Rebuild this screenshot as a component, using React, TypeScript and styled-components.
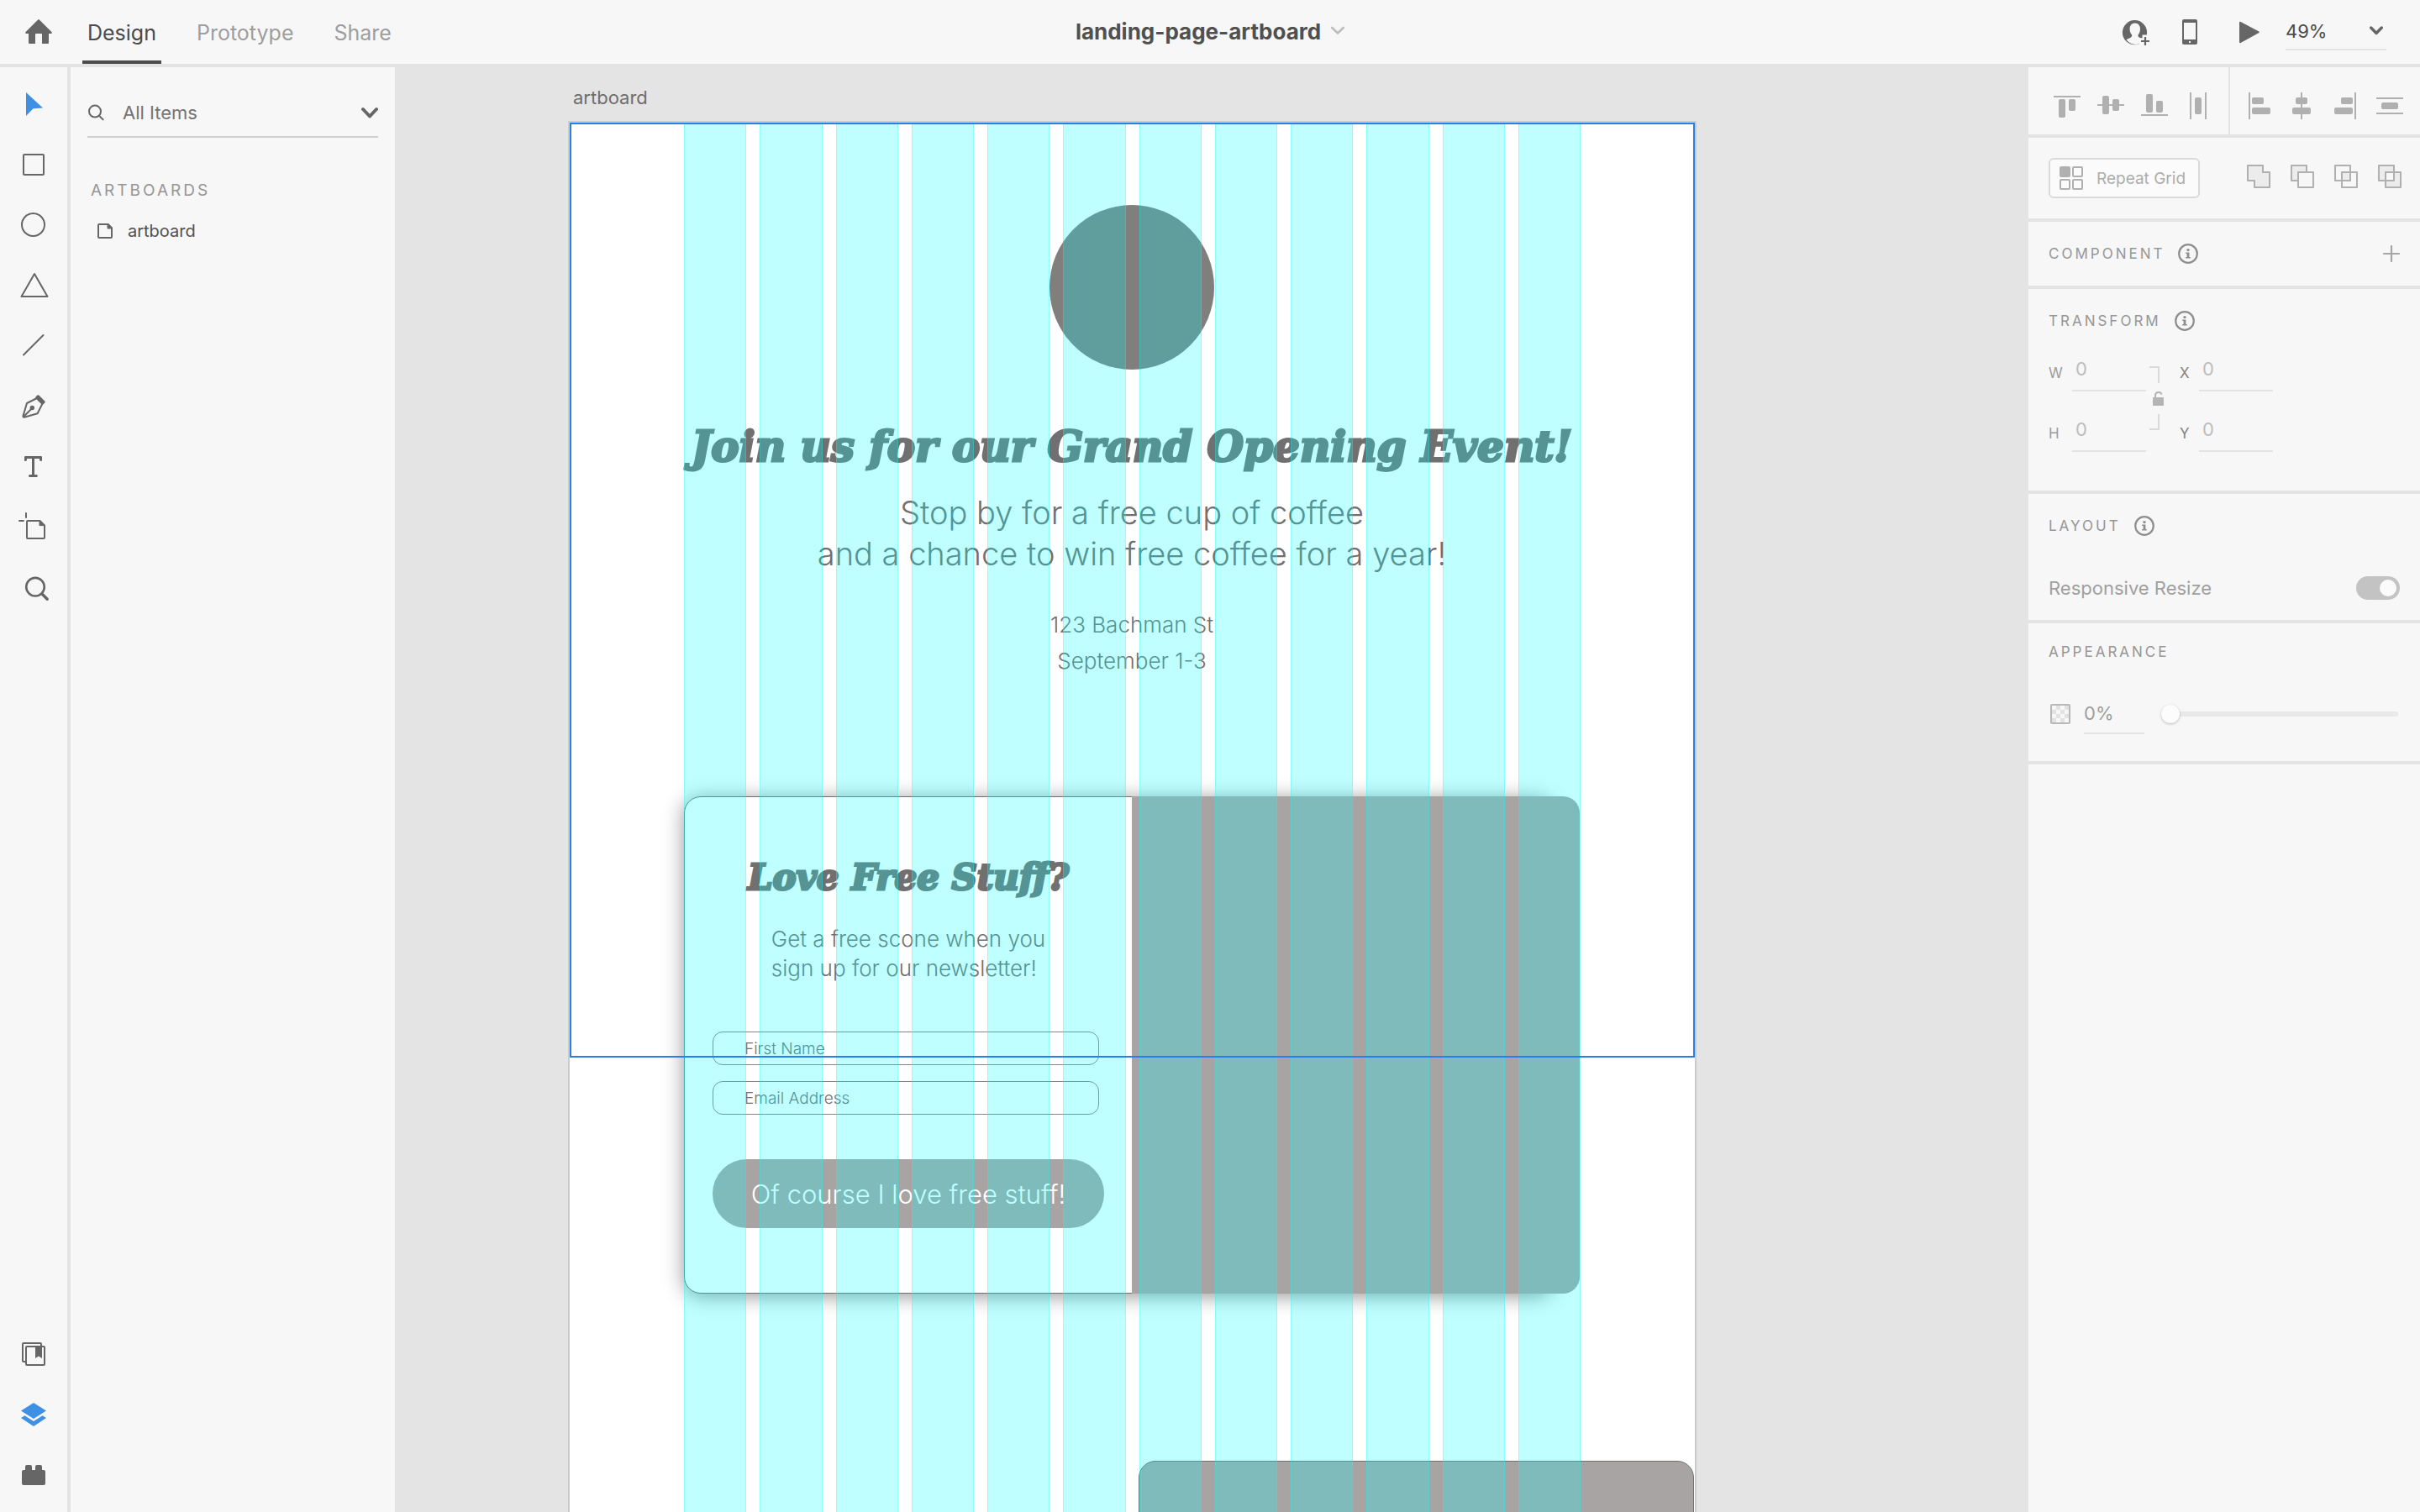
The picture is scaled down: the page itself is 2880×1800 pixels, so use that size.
import React from "react";
import styled, { createGlobalStyle } from "styled-components";

const ui = `Inter, "Noto Sans", sans-serif`;
const display = `"DejaVu Serif", "Liberation Serif", serif`;
const line = "#e3e3e3";
const surface = "#f7f7f7";
const ink = "#666666";
const muted = "#b0b0b0";

const GlobalStyle = createGlobalStyle`
  *, *::before, *::after { box-sizing: border-box; }
  body { margin: 0; font-family: ${ui}; background: ${surface}; }
  h1, h2, p, ul { margin: 0; padding: 0; }
  button, input, select { font: inherit; color: inherit; border: 0; background: none; padding: 0; margin: 0; outline: 0; }
  svg { display: block; flex: none; }
`;

const Page = styled.div`
  display: flex;
  flex-direction: column;
  height: 100vh;
  overflow: hidden;
`;

/* ---------- top bar ---------- */

const TopBar = styled.header`
  display: grid;
  grid-template-columns: 1fr auto 1fr;
  height: 80px;
  flex: none;
  background: ${surface};
  border-bottom: 4px solid ${line};
`;

const Nav = styled.nav`
  display: flex;
  align-items: center;
  gap: 36px;
  padding-left: 30px;
`;

const Tab = styled.button<{ $active?: boolean }>`
  height: 76px;
  padding: 2px 6px 0;
  font-size: 25px;
  color: ${(p) => (p.$active ? "#4b4b4b" : "#9e9e9e")};
  border-top: 4px solid transparent;
  border-bottom: 4px solid ${(p) => (p.$active ? "#4b4b4b" : "transparent")};
`;

const PlainButton = styled.button`
  display: flex;
  align-items: center;
  justify-content: center;
`;

const DocTitle = styled.button`
  display: flex;
  align-items: center;
  gap: 12px;
  padding-bottom: 2px;
  font-size: 26px;
  font-weight: 700;
  color: #505050;
`;

const Actions = styled.div`
  display: flex;
  align-items: center;
  justify-content: flex-end;
  gap: 24px;
  padding-right: 40px;
`;

const ZoomField = styled.label`
  display: flex;
  align-items: center;
  width: 120px;
  height: 44px;
  padding-right: 4px;
  border-bottom: 2px solid ${line};
`;

const ZoomSelect = styled.select`
  appearance: none;
  flex: 1;
  min-width: 0;
  height: 100%;
  font-size: 22px;
  color: #4b4b4b;
`;

/* ---------- left side ---------- */

const Body = styled.div`
  display: flex;
  flex: 1;
  min-height: 0;
`;

const ToolRail = styled.aside`
  display: flex;
  flex-direction: column;
  justify-content: space-between;
  width: 84px;
  flex: none;
  padding: 8px 0;
  background: ${surface};
  border-right: 4px solid ${line};
`;

const ToolGroup = styled.div`
  display: flex;
  flex-direction: column;
`;

const ItemsPanel = styled.aside`
  width: 386px;
  flex: none;
  padding: 24px 20px;
  background: ${surface};
`;

const Search = styled.label`
  display: flex;
  align-items: center;
  height: 60px;
  padding-top: 2px;
  border-bottom: 2px solid #cfcfcf;
`;

const SearchInput = styled.input`
  flex: 1;
  min-width: 0;
  padding-left: 22px;
  font-size: 22px;
  color: #747474;
  &::placeholder { color: #747474; opacity: 1; }
`;

const Caps = styled.h2<{ $large?: boolean }>`
  font-size: ${(p) => (p.$large ? 19 : 17)}px;
  line-height: 20px;
  font-weight: 400;
  letter-spacing: 3px;
  color: #969696;
`;

const ListBlock = styled.section`
  display: grid;
  gap: 23px;
  padding: 53px 0 0 4px;
`;

const Items = styled.ul`
  list-style: none;
`;

const Item = styled.li`
  display: flex;
  align-items: center;
  gap: 18px;
  height: 30px;
  padding-left: 8px;
  font-size: 20px;
  color: #505050;
`;

/* ---------- canvas ---------- */

const Canvas = styled.main`
  display: flex;
  flex-direction: column;
  flex: 1;
  min-width: 0;
  overflow: hidden;
  padding-left: 208px;
  background: #e4e4e4;
`;

const ArtboardName = styled.p`
  padding: 21px 0 15px 4px;
  font-size: 22px;
  line-height: 30px;
  color: #6e6e6e;
`;

const Artboard = styled.article`
  position: relative;
  display: flex;
  flex-direction: column;
  align-items: center;
  flex: 1;
  width: 1339px;
  padding: 98px 1px 0 0;
  background: #fff;
  color: #707070;
  box-shadow: 0 0 0 2px rgba(0, 0, 0, 0.1);
`;

const Logo = styled.div`
  width: 196px;
  height: 196px;
  flex: none;
  border-radius: 50%;
  background: #817e7e;
`;

const Headline = styled.h1<{ $small?: boolean }>`
  font-family: ${display};
  font-style: italic;
  font-weight: 700;
  font-size: ${(p) => (p.$small ? 42 : 50)}px;
  line-height: ${(p) => (p.$small ? 50 : 60)}px;
  -webkit-text-stroke: 3px #707070;
  white-space: nowrap;
`;

const Intro = styled.div`
  display: flex;
  flex-direction: column;
  align-items: center;
  padding: 62px 0 140px;
  text-align: center;
  font-weight: 300;
`;

const Lead = styled.p`
  margin-top: 24px;
  font-size: 38px;
  line-height: 49px;
`;

const Details = styled.p`
  margin-top: 38px;
  font-size: 26px;
  line-height: 43px;
`;

const Card = styled.section`
  position: relative;
  display: grid;
  grid-template-columns: 1fr 1fr;
  flex: none;
  width: 1066px;
  height: 592px;

  &::before {
    content: "";
    position: absolute;
    inset: 0 32px 0 0;
    background: #fff;
    border: 1px solid #707070;
    border-radius: 20px;
    box-shadow: 0 3px 24px rgba(0, 0, 0, 0.42);
  }
`;

const SignUp = styled.form`
  position: relative;
  display: flex;
  flex-direction: column;
  align-items: center;
  padding: 72px 33px 0 34px;
`;

const Pitch = styled.p`
  margin: 30px 0 58px;
  font-size: 26px;
  line-height: 35px;
  font-weight: 300;
`;

const Fields = styled.div`
  display: grid;
  gap: 19px;
  align-self: flex-start;
  width: 460px;
`;

const TextField = styled.input`
  height: 40px;
  padding-left: 37px;
  border: 1px solid #858585;
  border-radius: 12px;
  font-size: 19px;
  font-weight: 300;
  &::placeholder { color: #707070; opacity: 1; }
`;

const Submit = styled.button`
  align-self: stretch;
  height: 82px;
  margin-top: 53px;
  border-radius: 41px;
  background: #a8a4a3;
  color: #fff;
  font-size: 31px;
  font-weight: 300;
`;

const Photo = styled.div`
  position: relative;
  border-radius: 0 20px 20px 0;
  background: #a8a4a3;
`;

const NextPhoto = styled.div`
  align-self: flex-end;
  flex: none;
  width: 661px;
  height: 600px;
  margin-top: 199px;
  border: 1px solid #707070;
  border-radius: 20px;
  background: #a8a4a3;
`;

const ColumnGrid = styled.div`
  position: absolute;
  inset: 0 136px;
  display: grid;
  grid-template-columns: repeat(12, 1fr);
  gap: 16px;
  pointer-events: none;
`;

const Column = styled.i`
  background: rgba(0, 255, 255, 0.25);
  border: solid rgba(0, 255, 255, 0.28);
  border-width: 0 1px;
`;

const Viewport = styled.div`
  position: absolute;
  inset: 0 0 auto;
  height: 1113px;
  border: 2px solid #2680eb;
  pointer-events: none;
`;

/* ---------- inspector ---------- */

const Inspector = styled.aside`
  width: 466px;
  flex: none;
  background: ${surface};
`;

const Section = styled.section<{ $bottom?: number }>`
  padding: 24px 24px ${(p) => p.$bottom ?? 24}px;
  border-bottom: 4px solid ${line};
`;

const AlignRow = styled.div`
  display: flex;
  border-bottom: 4px solid ${line};
`;

const AlignGroup = styled.div`
  display: flex;
  padding: 0 10px;
  & + & { border-left: 2px solid ${line}; padding-right: 0; }
  &:first-child { padding-left: 20px; }
`;

const ToolRow = styled.div`
  display: flex;
  align-items: center;
  justify-content: space-between;
  margin-right: -2px;
`;

const RepeatGrid = styled.button`
  display: flex;
  align-items: center;
  gap: 16px;
  height: 48px;
  padding: 0 15px 0 11px;
  border: 2px solid #dadada;
  border-radius: 6px;
  background: #fbfbfb;
  font-size: 19px;
  color: #adadad;
`;

const BooleanGroup = styled.div`
  display: flex;
  gap: 24px;
`;

const SectionHead = styled.div`
  display: flex;
  align-items: center;
  gap: 16px;
  height: 28px;
`;

const Spacer = styled.span`
  flex: 1;
`;

const TransformGrid = styled.div`
  display: grid;
  grid-template-columns: 116px 40px 111px;
  row-gap: 20px;
  margin-top: 18px;
`;

const LinkCell = styled.div`
  grid-column: 2;
  grid-row: 1 / span 2;
`;

const NumberField = styled.label<{ $dark?: boolean }>`
  display: flex;
  align-items: center;
  justify-content: space-between;
  height: 52px;
  font-size: 17px;
  color: ${(p) => (p.$dark ? "#828282" : "#9c9c9c")};
`;

const FieldLetter = styled.span`
  padding-top: 8px;
`;

const NumberInput = styled.input`
  width: 88px;
  height: 52px;
  padding-left: 4px;
  border-bottom: 2px solid ${line};
  font-size: 22px;
  color: #bdbdbd;
`;

const SwitchRow = styled.label`
  display: flex;
  align-items: center;
  justify-content: space-between;
  height: 28px;
  margin-top: 46px;
  font-size: 22px;
  color: #a0a0a0;
`;

const Switch = styled.input`
  appearance: none;
  display: flex;
  justify-content: flex-end;
  width: 52px;
  height: 28px;
  padding: 4px;
  border-radius: 14px;
  background: #c3c3c3;
  &::before {
    content: "";
    width: 20px;
    border-radius: 50%;
    background: #fbfbfb;
  }
`;

const OpacityRow = styled.div`
  display: flex;
  align-items: center;
  height: 48px;
  margin-top: 40px;
`;

const OpacityInput = styled.input`
  width: 72px;
  height: 48px;
  margin: 0 20px 0 16px;
  border-bottom: 2px solid ${line};
  font-size: 22px;
  color: #9e9e9e;
`;

const Slider = styled.input`
  appearance: none;
  flex: 1;
  min-width: 0;
  height: 24px;
  margin-right: 2px;
  &::-webkit-slider-runnable-track {
    height: 6px;
    border-radius: 3px;
    background: #e8e8e8;
  }
  &::-webkit-slider-thumb {
    appearance: none;
    width: 22px;
    height: 22px;
    margin-top: -8px;
    border-radius: 50%;
    background: #fcfcfc;
    box-shadow: 0 1px 3px rgba(0, 0, 0, 0.25);
  }
`;

/* ---------- icons ---------- */

const Chevron = ({ w, color, sw }: { w: number; color: string; sw: number }) => (
  <svg width={w} height={14} viewBox={`0 0 ${w} 14`} fill="none" stroke={color} strokeWidth={sw} strokeLinecap="round" strokeLinejoin="round">
    <path d={`M${sw / 2} 3 L${w / 2} ${w / 2 + 1.5} L${w - sw / 2} 3`} />
  </svg>
);

const ActionIcon = ({ children }: { children: React.ReactNode }) => (
  <svg width="44" height="44" viewBox="0 0 44 44" fill={ink}>{children}</svg>
);

const Info = () => (
  <svg width="24" height="24" viewBox="0 0 24 24" fill="#8e8e8e">
    <circle cx="12" cy="12" r="10.8" fill="none" stroke="#8e8e8e" strokeWidth="2.2" />
    <circle cx="12" cy="7.6" r="1.7" />
    <path d="M9.2 10.4H13.4V16H14.8V17.6H9.2V16H10.6V12H9.2Z" />
  </svg>
);

const stroke = { fill: "none", stroke: ink, strokeWidth: 2, strokeLinejoin: "round" as const, strokeLinecap: "round" as const };

const tools: { name: string; art: React.ReactNode }[] = [
  { name: "Select", art: <path d="M31 22L51 40.5L39.5 41.2L31 50Z" fill="#3d90e3" /> },
  { name: "Rectangle", art: <rect x="28" y="24" width="24" height="24" rx="1" {...stroke} /> },
  { name: "Ellipse", art: <circle cx="39.5" cy="35.5" r="13.5" {...stroke} /> },
  { name: "Polygon", art: <path d="M41 22L56.5 49H25.5Z" {...stroke} /> },
  { name: "Line", art: <path d="M28 46.5L51.5 23" {...stroke} /> },
  {
    name: "Pen",
    art: (
      <>
        <path d="M43 26.5L32 32L27.4 47.4Q27.4 48.8 28.8 48.8L44.6 44.3L50 33.5" {...stroke} />
        <path d="M28.2 48L38.3 37.7" {...stroke} />
        <circle cx="38.3" cy="37.5" r="2.7" fill={ink} />
        <path d="M44.4 22.6Q45.4 21.8 46.3 22.6L53.3 29.6Q54.2 30.6 53.4 31.5L51.3 33.4Q50.2 34 49.4 33.2L42.3 26.2Q41.7 25.2 42.5 24.4Z" fill={ink} />
      </>
    ),
  },
  {
    name: "Text",
    art: (
      <path d="M30 23H49Q50 23 50 24V28Q50 29 48.8 29Q47.2 29 47.2 28L47 26H41V45H43.5Q44.8 45 44.8 46.5Q44.8 48 43.5 48H35.3Q34 48 34 46.5Q34 45 35.3 45H38V26H32L31.8 28Q31.8 29 30.4 29Q29 29 29 28V24Q29 23 30 23Z" fill={ink} />
    ),
  },
  {
    name: "Artboard",
    art: (
      <>
        <path d="M47.5 28H33Q32 28 32 29V48Q32 49 33 49H52Q53 49 53 48V33.5Z" {...stroke} />
        <path d="M47 28V33.6H53Z" fill={ink} stroke={ink} />
        <path d="M31 19V24M23 28H28" {...stroke} />
      </>
    ),
  },
  {
    name: "Zoom",
    art: (
      <>
        <circle cx="42" cy="34.7" r="10.8" {...stroke} strokeWidth={2.6} />
        <path d="M50 43L56.2 49.2" {...stroke} strokeWidth={3.4} />
      </>
    ),
  },
];

const drawers: { name: string; art: React.ReactNode }[] = [
  {
    name: "Libraries",
    art: (
      <>
        <path d="M30 45H28Q27 45 27 44V24Q27 23 28 23H48Q49 23 49 24V26" {...stroke} />
        <rect x="31" y="27" width="22" height="22" rx="1" {...stroke} />
        <path d="M42 27H50V41L46 38.4L42 41Z" fill={ink} />
      </>
    ),
  },
  {
    name: "Layers",
    art: (
      <>
        <path d="M40 22L55 31.5L40 41L25 31.5Z" fill="#3d90e3" />
        <path d="M25 40L29.4 37.2L40 44L50.6 37.2L55 40L40 50Z" fill="#3d90e3" />
      </>
    ),
  },
  { name: "Plugins", art: <path d="M28 30H30V26Q30 24 32 24H36Q38 24 38 26V30H42V26Q42 24 44 24H48Q50 24 50 26V30H52Q54 30 54 32V46Q54 48 52 48H28Q26 48 26 46V32Q26 30 28 30Z" fill={ink} /> },
];

const ToolButtons = ({ list }: { list: typeof tools }) => (
  <ToolGroup>
    {list.map((t) => (
      <PlainButton key={t.name} aria-label={t.name}>
        <svg width="80" height="72" viewBox="0 0 80 72">{t.art}</svg>
      </PlainButton>
    ))}
  </ToolGroup>
);

type Bar = [number, number, number, number];
const alignSets: { name: string; lines: Bar[]; bars: Bar[] }[][] = [
  [
    { name: "Align top", lines: [[10, 34, 32, 2]], bars: [[16, 38, 8, 22], [28, 38, 8, 14]] },
    { name: "Align middle", lines: [[10, 44, 32, 2]], bars: [[16, 34, 8, 22], [28, 38, 8, 14]] },
    { name: "Align bottom", lines: [[10, 56, 32, 2]], bars: [[16, 32, 8, 22], [28, 40, 8, 14]] },
    { name: "Distribute horizontally", lines: [[16, 30, 2, 32], [34, 30, 2, 32]], bars: [[22, 36, 8, 20]] },
  ],
  [
    { name: "Align left", lines: [[12, 30, 2, 32]], bars: [[16, 36, 14, 8], [16, 48, 22, 8]] },
    { name: "Align center", lines: [[22, 30, 2, 32]], bars: [[16, 36, 14, 8], [12, 48, 22, 8]] },
    { name: "Align right", lines: [[34, 30, 2, 32]], bars: [[18, 36, 14, 8], [10, 48, 22, 8]] },
    { name: "Distribute vertically", lines: [[8, 36, 32, 2], [8, 54, 32, 2]], bars: [[14, 42, 20, 8]] },
  ],
];

const A = "M1 1H19V19H1Z";
const B = "M9 9H27V27H9Z";
const booleans: { name: string; art: React.ReactNode }[] = [
  { name: "Add", art: <path d="M1 1H19V9H27V27H9V19H1Z" fill="#ececec" /> },
  { name: "Subtract", art: <><path d={A} fill="#ececec" /><path d={B} fill={surface} /></> },
  { name: "Intersect", art: <><path d="M9 9H19V19H9Z" fill="#ececec" /><path d={A} /><path d={B} /></> },
  { name: "Exclude", art: <><path d={A} fill="#ececec" /><path d={B} fill="#ececec" /><path d="M9 9H19V19H9Z" fill={surface} /></> },
];

const checks = [[5, 0], [15, 0], [0, 5], [10, 5], [5, 10], [15, 10], [0, 15], [10, 15]];

const Field = ({ letter, dark }: { letter: string; dark?: boolean }) => (
  <NumberField $dark={dark}>
    <FieldLetter>{letter}</FieldLetter>
    <NumberInput defaultValue="0" />
  </NumberField>
);

export default function App() {
  return (
    <Page>
      <GlobalStyle />
      <TopBar>
        <Nav>
          <PlainButton aria-label="Home">
            <svg width="32" height="32" viewBox="0 0 32 32" fill={ink}>
              <path d="M15.2 1.4Q16 .8 16.8 1.4L31.6 16.2Q32.4 17.6 31 18H28V29Q28 30 27 30H20V19Q20 18 19 18H13Q12 18 12 19V30H5Q4 30 4 29V18H1Q-.4 17.6 .4 16.2Z" />
            </svg>
          </PlainButton>
          <Tab $active>Design</Tab>
          <Tab>Prototype</Tab>
          <Tab>Share</Tab>
        </Nav>
        <DocTitle>
          landing-page-artboard
          <Chevron w={16} color="#bdbdbd" sw={2.6} />
        </DocTitle>
        <Actions>
          <PlainButton aria-label="Invite">
            <ActionIcon>
              <circle cx="24.5" cy="22.7" r="14.6" />
              <path d="M24.8 11.6C28.6 11.6 31 14.4 31 18.4C31 21.4 30 23.6 28.6 25.2C28 27.8 29.6 28.6 34.6 30.4V33A13 13 0 0 1 14.4 31C20 28.8 21.6 27.8 21 25.2C19.5 23.6 18.6 21.4 18.6 18.4C18.6 14.4 21 11.6 24.8 11.6Z" fill={surface} />
              <path d="M37 25.5V40M29.5 32.8H44" stroke={surface} strokeWidth="7" />
              <path d="M37 28V38M32 33H42" stroke={ink} strokeWidth="2.2" />
            </ActionIcon>
          </PlainButton>
          <PlainButton aria-label="Device preview">
            <ActionIcon>
              <rect x="13" y="7" width="18" height="30" rx="2" />
              <rect x="15" y="11" width="14" height="20" fill={surface} />
              <rect x="21" y="33" width="2" height="2" fill={surface} />
            </ActionIcon>
          </PlainButton>
          <PlainButton aria-label="Play">
            <ActionIcon>
              <path d="M13 11Q13 9.4 14.6 10L36.4 21.4Q37.4 22.2 36.4 23L14.6 35Q13 35.6 13 34Z" />
            </ActionIcon>
          </PlainButton>
          <ZoomField>
            <ZoomSelect aria-label="Zoom level" defaultValue="49%">
              <option>49%</option>
            </ZoomSelect>
            <Chevron w={16} color={ink} sw={3.4} />
          </ZoomField>
        </Actions>
      </TopBar>

      <Body>
        <ToolRail>
          <ToolButtons list={tools} />
          <ToolButtons list={drawers} />
        </ToolRail>

        <ItemsPanel>
          <Search>
            <svg width="20" height="20" viewBox="0 0 20 20" fill="none" stroke={ink} strokeWidth="2" strokeLinecap="round">
              <circle cx="9" cy="8.6" r="7" />
              <path d="M14 13.8L18.6 18.4" />
            </svg>
            <SearchInput aria-label="Search items" placeholder="All Items" />
            <Chevron w={20} color={ink} sw={4} />
          </Search>
          <ListBlock>
            <Caps $large>ARTBOARDS</Caps>
            <Items>
              <Item>
                <svg width="18" height="18" viewBox="0 0 18 18" fill="none" stroke={ink} strokeWidth="2" strokeLinejoin="round">
                  <path d="M12.5 1H2Q1 1 1 2V16Q1 17 2 17H16Q17 17 17 16V5.5Z" />
                  <path d="M12.5 1V5.5H17Z" fill={ink} />
                </svg>
                artboard
              </Item>
            </Items>
          </ListBlock>
        </ItemsPanel>

        <Canvas>
          <ArtboardName>artboard</ArtboardName>
          <Artboard>
            <Logo />
            <Intro>
              <Headline>Join us for our Grand Opening Event!</Headline>
              <Lead>
                Stop by for a free cup of coffee
                <br />
                and a chance to win free coffee for a year!
              </Lead>
              <Details>
                123 Bachman St
                <br />
                September 1-3
              </Details>
            </Intro>
            <Card>
              <SignUp>
                <Headline as="h2" $small>Love Free Stuff?</Headline>
                <Pitch>
                  Get a free scone when you
                  <br />
                  sign up for our newsletter!
                </Pitch>
                <Fields>
                  <TextField aria-label="First Name" placeholder="First Name" />
                  <TextField aria-label="Email Address" placeholder="Email Address" />
                </Fields>
                <Submit type="button">Of course I love free stuff!</Submit>
              </SignUp>
              <Photo />
            </Card>
            <NextPhoto />
            <ColumnGrid>
              {Array.from({ length: 12 }, (_, i) => <Column key={i} />)}
            </ColumnGrid>
            <Viewport />
          </Artboard>
        </Canvas>

        <Inspector>
          <AlignRow>
            {alignSets.map((set, i) => (
              <AlignGroup key={i}>
                {set.map((a) => (
                  <PlainButton key={a.name} aria-label={a.name}>
                    <svg width="52" height="80" viewBox="0 0 52 80" fill={muted}>
                      {a.lines.map(([x, y, w, h], k) => <rect key={k} x={x} y={y} width={w} height={h} />)}
                      {a.bars.map(([x, y, w, h], k) => <rect key={k} x={x} y={y} width={w} height={h} rx="2" />)}
                    </svg>
                  </PlainButton>
                ))}
              </AlignGroup>
            ))}
          </AlignRow>

          <Section>
            <ToolRow>
              <RepeatGrid>
                <svg width="28" height="28" viewBox="0 0 28 28" fill="none" stroke={muted} strokeWidth="2">
                  <rect x="1" y="1" width="11" height="11" rx="1" fill={muted} />
                  <rect x="16" y="1" width="11" height="11" rx="1" />
                  <rect x="1" y="16" width="11" height="11" rx="1" />
                  <rect x="16" y="16" width="11" height="11" rx="1" />
                </svg>
                Repeat Grid
              </RepeatGrid>
              <BooleanGroup>
                {booleans.map((b) => (
                  <PlainButton key={b.name} aria-label={b.name}>
                    <svg width="28" height="32" viewBox="0 0 28 32" fill="none" stroke={muted} strokeWidth="2" strokeLinejoin="round">{b.art}</svg>
                  </PlainButton>
                ))}
              </BooleanGroup>
            </ToolRow>
          </Section>

          <Section>
            <SectionHead>
              <Caps>COMPONENT</Caps>
              <Info />
              <Spacer />
              <PlainButton aria-label="Add component">
                <svg width="20" height="20" viewBox="0 0 20 20" stroke="#a6a6a6" strokeWidth="2.2" strokeLinecap="round">
                  <path d="M10 1V19M1 10H19" />
                </svg>
              </PlainButton>
            </SectionHead>
          </Section>

          <Section $bottom={46}>
            <SectionHead>
              <Caps>TRANSFORM</Caps>
              <Info />
            </SectionHead>
            <TransformGrid>
              <Field letter="W" />
              <LinkCell>
                <svg width="40" height="124" viewBox="0 0 40 124" fill="none">
                  <path d="M4 23H15V42M4 97H15V79" stroke="#dadada" strokeWidth="2" />
                  <path d="M11 60V57Q11 53 15 53Q18 53 18.4 55.6" stroke="#b4b4b4" strokeWidth="2" />
                  <rect x="8" y="59" width="13" height="10" rx="1" fill="#b4b4b4" />
                </svg>
              </LinkCell>
              <Field letter="X" dark />
              <Field letter="H" />
              <Field letter="Y" dark />
            </TransformGrid>
          </Section>

          <Section>
            <SectionHead>
              <Caps>LAYOUT</Caps>
              <Info />
            </SectionHead>
            <SwitchRow>
              Responsive Resize
              <Switch type="checkbox" role="switch" defaultChecked />
            </SwitchRow>
          </Section>

          <Section $bottom={32}>
            <Caps>APPEARANCE</Caps>
            <OpacityRow>
              <svg width="26" height="24" viewBox="0 0 26 24">
                <g transform="translate(4 2)" fill="#e2e2e2">
                  {checks.map(([x, y]) => <rect key={`${x}-${y}`} x={x} y={y} width="5" height="5" />)}
                </g>
                <rect x="3" y="1" width="22" height="22" rx="1" fill="none" stroke="#b8b8b8" strokeWidth="2" />
              </svg>
              <OpacityInput aria-label="Opacity value" defaultValue="0%" />
              <Slider type="range" aria-label="Opacity" min={0} max={100} defaultValue={0} />
            </OpacityRow>
          </Section>
        </Inspector>
      </Body>
    </Page>
  );
}
